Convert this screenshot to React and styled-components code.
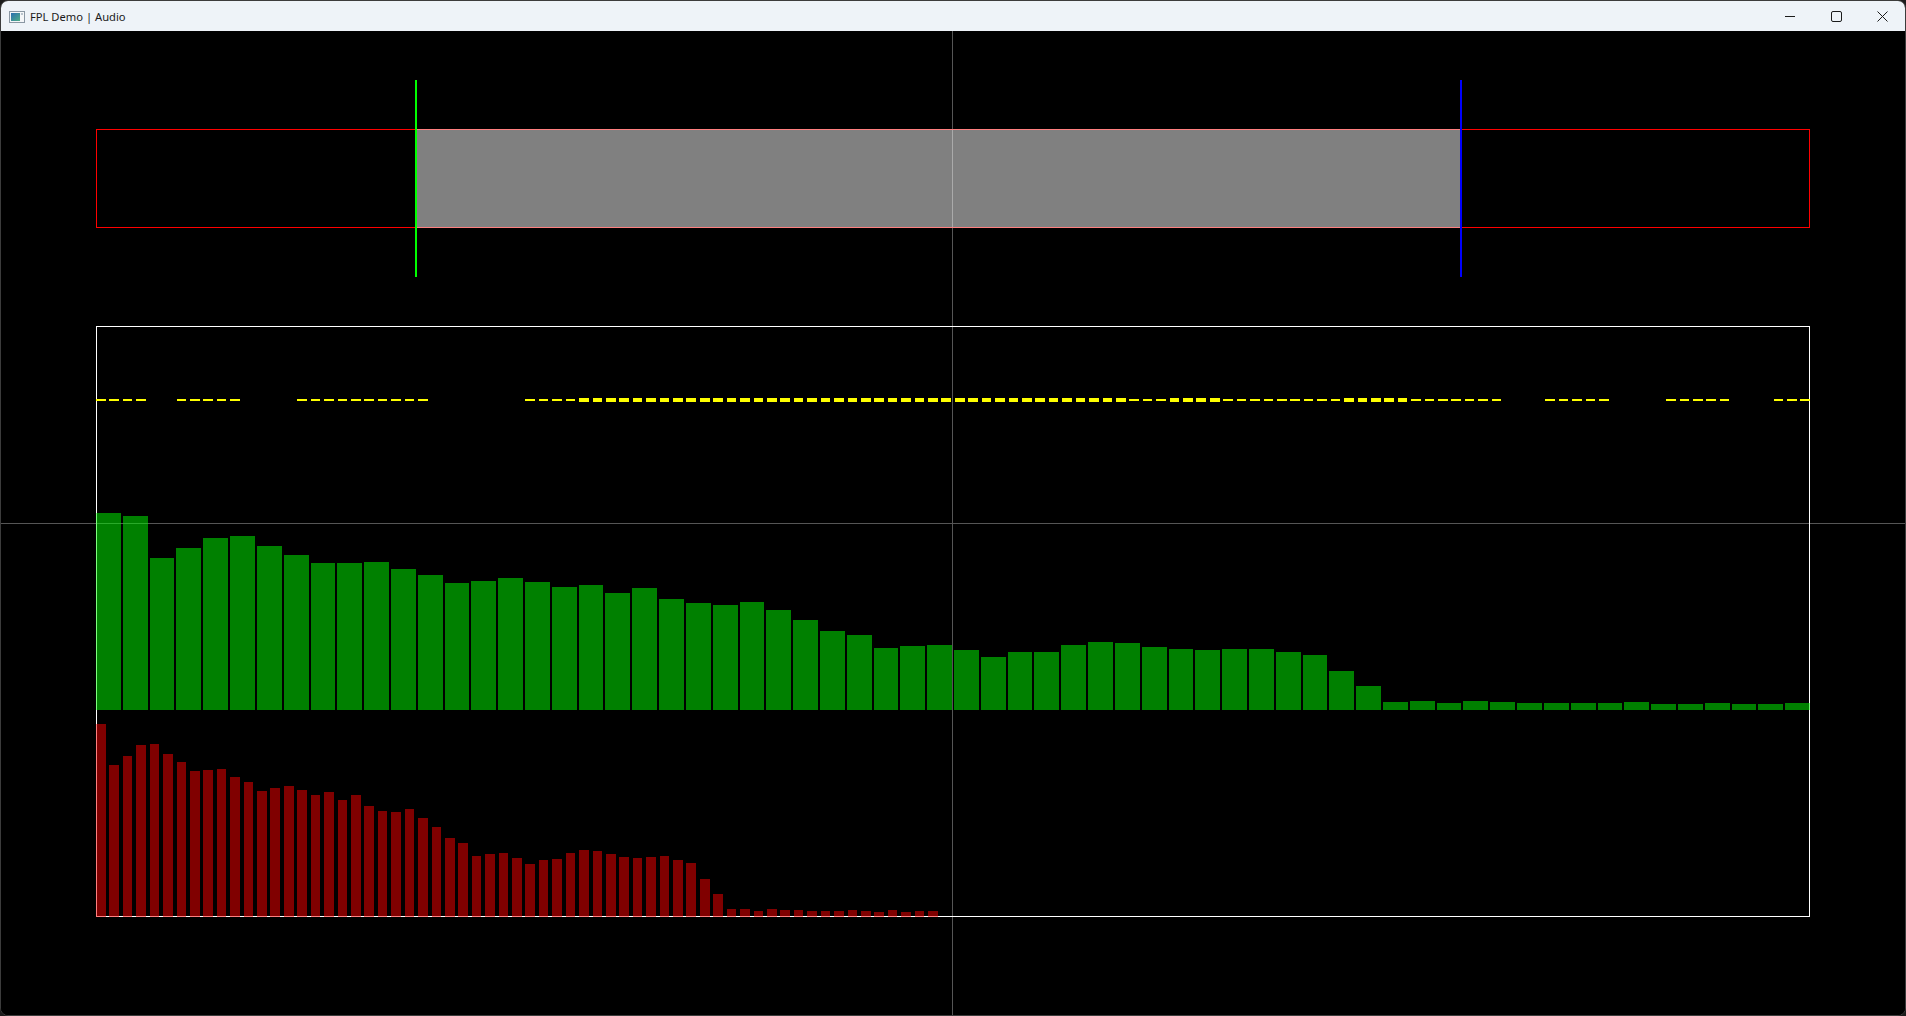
import React from "react";
import styled, { createGlobalStyle } from "styled-components";

// bar heights in px, read off the spectrum view
const greenHeights = [
  197, 194, 152, 162, 172, 174, 164, 155, 147, 147, 148, 141, 135, 127, 129, 132,
  128, 123, 125, 117, 122, 111, 107, 105, 108, 100, 90, 79, 75, 62, 64, 65,
  60, 53, 58, 58, 65, 68, 67, 63, 61, 60, 61, 61, 58, 55, 39, 24,
  8, 9, 7, 9, 8, 7, 7, 7, 7, 8, 6, 6, 7, 6, 6, 7,
];

const redHeights = [
  193, 152, 161, 172, 173, 163, 155, 146, 147, 148, 140, 135, 126, 129, 131, 127,
  122, 125, 117, 122, 111, 106, 105, 108, 99, 90, 79, 74, 61, 63, 64, 59,
  53, 57, 58, 64, 67, 66, 63, 60, 59, 60, 61, 57, 54, 38, 23, 8,
  8, 6, 8, 7, 7, 6, 6, 6, 7, 6, 5, 7, 5, 6, 6, 0,
];

// runs of [count, kind] : 0 = gap, 1 = thin dash, 2 = thick dash
const dashRuns = [
  [4, 1], [2, 0], [5, 1], [4, 0], [10, 1], [7, 0], [4, 1], [41, 2], [3, 1],
  [4, 2], [9, 1], [5, 2], [7, 1], [3, 0], [5, 1], [4, 0], [5, 1], [3, 0], [3, 1],
];
const dashes = dashRuns.flatMap(([n, kind]) => Array(n).fill(kind));

const App = () => {
  return (
    <>
      <GlobalStyle />
      <Window>
        <TitleBar>
          <AppIcon width="16" height="12" viewBox="0 0 16 12">
            <defs>
              <linearGradient id="ico" x1="0" y1="0" x2="1" y2="1">
                <stop offset="0" stopColor="#2b6fb0" />
                <stop offset="1" stopColor="#4fae86" />
              </linearGradient>
            </defs>
            <rect x="0.5" y="0.5" width="15" height="11" fill="#f4f6f8" stroke="#8a97a3" />
            <rect x="2" y="2" width="9" height="8" fill="url(#ico)" />
            <rect x="12" y="2" width="2" height="2" fill="#b9c3cc" />
          </AppIcon>
          <Title>FPL Demo | Audio</Title>
          <Controls>
            <CaptionButton aria-label="Minimize">
              <svg width="10" height="10" viewBox="0 0 10 10">
                <path d="M0 5.5h10" stroke="#1b1b1b" strokeWidth="1" />
              </svg>
            </CaptionButton>
            <CaptionButton aria-label="Maximize">
              <svg width="11" height="11" viewBox="0 0 11 11">
                <rect x="0.5" y="0.5" width="10" height="10" rx="1.5" fill="none" stroke="#1b1b1b" />
              </svg>
            </CaptionButton>
            <CaptionButton aria-label="Close">
              <svg width="11" height="11" viewBox="0 0 11 11">
                <path d="M0.5 0.5l10 10M10.5 0.5l-10 10" stroke="#1b1b1b" strokeWidth="1" />
              </svg>
            </CaptionButton>
          </Controls>
        </TitleBar>

        <Client>
          <Slider>
            <Track />
            <Range />
            <Marker $color="#00ff00" $at={319} />
            <Marker $color="#0000ff" $at={1364} />
          </Slider>

          <Spectrum>
            <DashRow>
              {dashes.map((kind, i) => (
                <Dash key={i} $kind={kind} />
              ))}
            </DashRow>
            <GreenRow>
              {greenHeights.map((h, i) => (
                <GreenBar key={i} style={{ height: h }} />
              ))}
            </GreenRow>
            <RedRow>
              {redHeights.map((h, i) => (
                <RedBar key={i} style={{ height: h }} />
              ))}
            </RedRow>
          </Spectrum>
        </Client>
      </Window>
    </>
  );
};

//styled

const GlobalStyle = createGlobalStyle`
  html, body {
    margin: 0;
    padding: 0;
    background: #1c1c1c;
  }
  body {
    font-family: "Noto Sans", "Open Sans", sans-serif;
  }
`;

const Window = styled.div`
  width: 1906px;
  height: 1016px;
  box-sizing: border-box;
  border: 1px solid #3c3c3c;
  border-radius: 8px;
  overflow: hidden;
  display: flex;
  flex-direction: column;
  background: #000;
`;

const TitleBar = styled.div`
  height: 30px;
  flex: none;
  display: flex;
  align-items: center;
  background: #eef3f8;
  padding-left: 8px;
`;

const AppIcon = styled.svg`
  flex: none;
  margin-top: 1px;
`;

const Title = styled.span`
  margin-left: 5px;
  font-size: 11.2px;
  color: #1a1a1a;
  flex: 1;
`;

const Controls = styled.div`
  display: flex;
  height: 100%;
`;

const CaptionButton = styled.div`
  width: 46px;
  height: 100%;
  display: flex;
  align-items: center;
  justify-content: center;
`;

const Client = styled.div`
  flex: 1;
  padding: 49px 0 0 95px;
  background:
    linear-gradient(#555, #555) 951px 0 / 1px 100% no-repeat,
    linear-gradient(#555, #555) 0 492px / 100% 1px no-repeat,
    #000;
`;

const Slider = styled.div`
  position: relative;
  width: 1714px;
  height: 197px;
  padding-top: 49px;
  box-sizing: border-box;
`;

const Track = styled.div`
  height: 99px;
  box-sizing: border-box;
  border: 1px solid #ff0000;
`;

const Range = styled.div`
  position: absolute;
  top: 49px;
  left: 319px;
  width: 1045px;
  height: 99px;
  background: rgba(255, 255, 255, 0.5);
`;

const Marker = styled.div`
  position: absolute;
  top: 0;
  left: ${(p) => p.$at}px;
  width: 2px;
  height: 100%;
  background: ${(p) => p.$color};
`;

const Spectrum = styled.div`
  margin-top: 49px;
  width: 1714px;
  height: 591px;
  box-sizing: border-box;
  padding-top: 72px;
  box-shadow: inset 0 0 0 1px #fff;
  display: flex;
  flex-direction: column;
`;

const DashRow = styled.div`
  height: 4px;
  display: grid;
  grid-template-columns: repeat(128, 1fr);
  column-gap: 3.8px;
  align-items: center;
`;

const Dash = styled.div`
  height: ${(p) => (p.$kind === 2 ? 4 : 2)}px;
  background: ${(p) => (p.$kind === 0 ? "transparent" : "#ffff00")};
`;

const GreenRow = styled.div`
  height: 308px;
  display: grid;
  grid-template-columns: repeat(64, 1fr);
  column-gap: 2px;
  align-items: end;
`;

const GreenBar = styled.div`
  background: rgba(0, 255, 0, 0.5);
`;

const RedRow = styled.div`
  height: 207px;
  display: grid;
  grid-template-columns: repeat(128, 1fr);
  column-gap: 3.8px;
  align-items: end;
`;

const RedBar = styled.div`
  background: rgba(255, 0, 0, 0.5);
`;

export default App;
